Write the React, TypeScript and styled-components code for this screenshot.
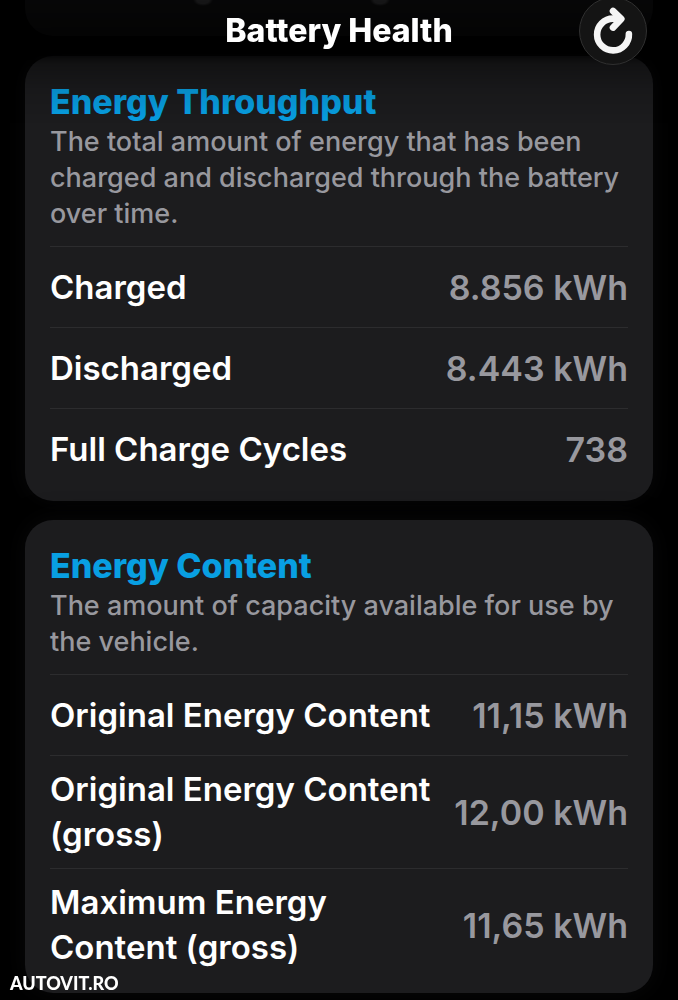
import React from "react";
import styled, { createGlobalStyle } from "styled-components";

const GlobalStyle = createGlobalStyle`
  * { box-sizing: border-box; }
  body {
    margin: 0;
    background: #000;
    color: #fff;
    font-family: Inter, "Liberation Sans", sans-serif;
  }
`;

const Page = styled.div`
  padding: 0 25px 7px;
`;

const Header = styled.header`
  position: fixed;
  inset: 0 0 auto;
  z-index: 2;
  height: 62px;
  display: grid;
  place-items: center;
`;

const Fade = styled.div`
  position: fixed;
  inset: 0 0 auto;
  z-index: 1;
  height: 124px;
  background: linear-gradient(
    rgba(0, 0, 0, 0.76) 0,
    rgba(0, 0, 0, 0.84) 34px,
    rgba(0, 0, 0, 0.84) 52px,
    rgba(0, 0, 0, 0.35) 64px,
    rgba(0, 0, 0, 0.12) 90px,
    transparent
  );
  pointer-events: none;
`;

const Heading = styled.h1`
  margin: 0;
  font-size: 32px;
  line-height: 40px;
  font-weight: 800;
`;

const RefreshButton = styled.button`
  position: absolute;
  top: -3px;
  right: 31px;
  width: 68px;
  height: 68px;
  padding: 0;
  border: 1px solid #303030;
  border-radius: 50%;
  background: #141414;
  color: #f5f5f5;
  svg { display: block; }
`;

const PreviousCard = styled.div`
  height: 36px;
  margin-bottom: 20px;
  border-radius: 0 0 28px 28px;
  background:
    radial-gradient(ellipse 10px 6px at 178px 0, #5c5c60 60%, transparent),
    radial-gradient(ellipse 10px 6px at 355px 0, #5c5c60 60%, transparent),
    #1c1c1e;
`;

const Card = styled.section`
  padding: 26px 25px 12px;
  border-radius: 28px;
  background: #1c1c1e;
  box-shadow: 0 0 24px #09090a;
  & + & { margin-top: 19px; }
`;

const Title = styled.h2`
  margin: 0 0 2px;
  color: #089fe2;
  font-size: 34px;
  line-height: 40px;
  font-weight: 800;
`;

const Description = styled.p`
  margin: 0 0 14px;
  color: #98989e;
  font-size: 27px;
  line-height: 36px;
  font-weight: 500;
`;

const List = styled.dl`
  margin: 0;
`;

const Row = styled.div`
  display: flex;
  align-items: center;
  justify-content: space-between;
  gap: 20px;
  min-height: 81px;
  padding: 11px 0;
  border-top: 1px solid #2c2c2e;
  line-height: 45px;
  font-weight: 600;
`;

const Label = styled.dt`
  font-size: 33px;
`;

const Value = styled.dd`
  margin: 0;
  color: #98989e;
  font-size: 34px;
  white-space: nowrap;
`;

const Watermark = styled.div`
  position: fixed;
  left: 10px;
  bottom: 6px;
  z-index: 3;
  font-family: Lato, sans-serif;
  font-size: 18px;
  line-height: 22px;
  font-weight: 900;
`;

const sections = [
  {
    title: "Energy Throughput",
    description: "The total amount of energy that has been charged and discharged through the battery over time.",
    rows: [
      ["Charged", "8.856 kWh"],
      ["Discharged", "8.443 kWh"],
      ["Full Charge Cycles", "738"],
    ],
  },
  {
    title: "Energy Content",
    description: "The amount of capacity available for use by the vehicle.",
    rows: [
      ["Original Energy Content", "11,15 kWh"],
      ["Original Energy Content (gross)", "12,00 kWh"],
      ["Maximum Energy Content (gross)", "11,65 kWh"],
    ],
  },
];

export default function App() {
  return (
    <>
      <GlobalStyle />
      <Header>
        <Heading>Battery Health</Heading>
        <RefreshButton aria-label="Refresh">
          <svg width="66" height="66" viewBox="0 0 66 66" fill="none" stroke="currentColor" strokeWidth="6.6" strokeLinecap="round" strokeLinejoin="round" aria-hidden="true">
            <path d="M48.9 36A15.9 15.9 0 1 1 33 20.6H39" />
            <path d="M33 13L41.3 21L33 29.6" />
          </svg>
        </RefreshButton>
      </Header>
      <Fade />
      <Page>
        <PreviousCard />
        {sections.map((section) => (
          <Card key={section.title}>
            <Title>{section.title}</Title>
            <Description>{section.description}</Description>
            <List>
              {section.rows.map(([label, value]) => (
                <Row key={label}>
                  <Label>{label}</Label>
                  <Value>{value}</Value>
                </Row>
              ))}
            </List>
          </Card>
        ))}
      </Page>
      <Watermark>AUTOVIT.RO</Watermark>
    </>
  );
}
